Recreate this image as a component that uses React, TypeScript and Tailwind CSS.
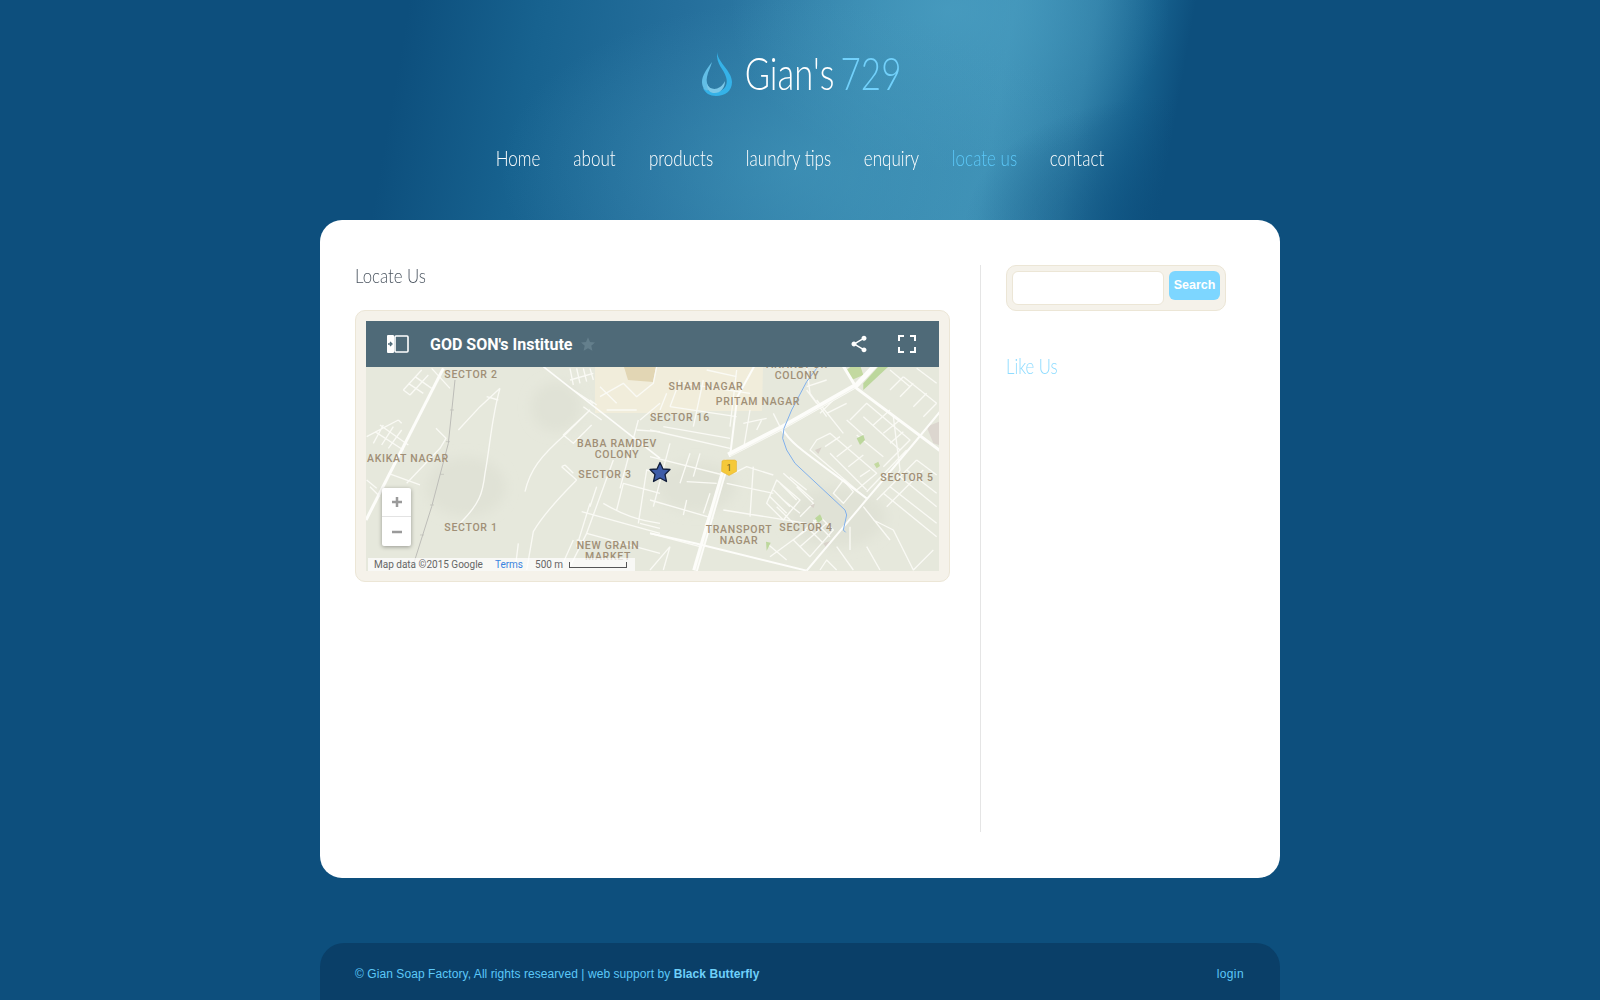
import React from "react";

const nav: [string, string][] = [
  ["Home", "w-[44px]"], ["about", "w-[43px]"], ["products", "w-[64px]"], ["laundry tips", "w-[85px]"],
  ["enquiry", "w-[55px]"], ["locate us", "w-[65px]"], ["contact", "w-[54px]"],
];

const labels: [string, number, number][] = [
  ["SECTOR 2", 105, 11], ["AKIKAT NAGAR", 42, 95], ["BABA RAMDEV", 251, 80], ["COLONY", 251, 91],
  ["SECTOR 3", 239, 111], ["SECTOR 1", 105, 164], ["NEW GRAIN", 242, 182], ["MARKET", 242, 193],
  ["SHAM NAGAR", 340, 23], ["PRITAM NAGAR", 392, 38], ["SECTOR 16", 314, 54], ["SECTOR 5", 541, 114],
  ["TRANSPORT", 373, 166], ["NAGAR", 373, 177], ["SECTOR 4", 440, 164], ["COLONY", 431, 12], ["ANANDPUR", 431, 1],
];

const leftMinor = [
  "M130 90 L185 30 M150 105 L205 45 M130 90 L150 105 M145 70 L190 100 M165 50 L215 85 M215 25 L270 85",
  "M20 230 L115 180 M40 250 L70 195 M65 255 L100 200 M85 265 L125 210 M45 215 L130 270 M60 195 L145 255 M115 180 L125 190",
  "M228 205 L258 235 L240 265 L140 370 M20 360 L50 385 M30 380 L60 410 M85 340 L180 375",
  "M295 210 L360 140 L420 85 M420 85 C395 170 390 260 375 340 C368 400 360 430 300 490 M380 110 L415 120",
  "M495 395 C510 330 540 290 620 220 L690 150 M690 150 L610 225 L640 250 L695 195",
  "M630 25 L640 75 M650 25 L660 70 M670 25 L680 65 M690 25 L700 60 M630 60 L700 40 M640 90 L700 130 M670 140 L725 180 M690 120 L710 135",
  "M500 630 L520 515 C540 480 590 420 650 360 M605 320 L650 360 M615 315 L640 340 M605 320 L615 315",
  "M840 490 L900 505 M730 430 C790 465 830 480 900 490 M680 520 L900 580 M665 455 L900 520 M770 450 L790 370 L900 400 M710 380 L690 440 M835 490 L860 330 L900 340 M780 385 L835 180 M830 210 L900 215 M870 160 L900 170",
  "M840 180 L900 130 M720 110 L790 70 L830 110 L880 70 L890 20 M740 150 L830 150 M720 80 L770 130",
  "M630 620 L680 520 L760 300 M690 430 L650 560 M475 550 L465 630 M650 540 L680 545 M600 630 L640 540",
];

const rightMinor = [
  "M0 210 L240 265 M0 290 L220 345 M0 420 L190 475 M0 520 L150 560 M60 250 L10 440 M120 280 L90 370 M150 280 L130 350 M110 420 L100 465 M0 630 L60 560 M60 560 L40 630",
  "M230 370 L370 400 M220 450 L470 490 M250 340 L290 320 L370 345 M310 320 L300 470 M200 400 L165 500 M110 365 L200 370 M180 400 L160 460",
  "M300 150 L280 270 M260 30 L240 200 M40 200 L240 235 M60 140 L260 170 M160 60 L130 200 M30 150 L50 100 M60 140 L90 60 M280 190 L350 175 M320 210 L335 180 M100 70 L300 100 M170 30 L260 50 M370 160 L400 220",
  "M470 20 L480 100 L530 170 M500 120 L580 220 M470 80 L530 60 M550 120 L510 160 M530 160 L590 130 M470 90 L500 130",
  "M500 240 L540 220 L680 340 L620 390 L480 270 Z M525 260 L570 230 M560 290 L605 255 M595 320 L640 285 M630 350 L660 330 M540 280 L650 390 M580 360 L610 395 L580 430 L550 400 Z",
  "M600 180 L650 130 L780 240 L700 320 M640 170 L750 270 M670 195 L720 150 M700 220 L750 180 M720 250 L760 215 M620 225 L700 290 M590 180 L640 225",
  "M700 20 L660 60 M720 90 L760 50 M750 110 L790 70 M790 140 L830 100 M820 170 L860 130 M760 50 L860 130 M800 25 L860 70 M720 30 L780 80",
  "M650 395 L770 270 M680 420 L800 300 M710 440 L820 330 M700 400 L860 530 M720 380 L860 490 M750 350 L860 440 M770 330 L860 400 M800 300 L860 345 M730 170 L750 330 L740 350 M640 440 L720 540 M670 480 L730 510 L790 630 L850 570",
  "M380 360 L450 420 L400 480 L350 430 Z M400 340 L490 420 M370 390 L420 440 M390 370 L440 420 M360 410 L410 460 M420 350 L470 390 M380 440 L430 490 M400 420 L450 460 M440 380 L490 430 L450 470",
  "M430 540 L510 470 L550 510 L480 590 Z M450 560 L530 490 M470 500 L520 550 M490 480 L540 530 M360 590 L470 510 M350 550 L410 600 M600 500 L600 570 M560 560 L610 630 M650 560 L690 630 M510 630 L530 600 L560 630",
];

function MapArt() {
  return (
    <svg width="573" height="204" viewBox="0 0 573 204" className="block">
      <defs>
        <filter id="mapblur"><feGaussianBlur stdDeviation="6" /></filter>
      </defs>
      <rect width="573" height="204" fill="#e6e8dc" />
      <g filter="url(#mapblur)" fill="#e0e2d6">
        <ellipse cx="100" cy="120" rx="40" ry="30" />
        <ellipse cx="190" cy="40" rx="25" ry="25" />
        <ellipse cx="470" cy="150" rx="50" ry="30" />
        <ellipse cx="330" cy="120" rx="40" ry="25" />
      </g>
      <path d="M229 0 H397 L396 44 L330 44 L320 46 L229 46 Z" fill="#f1eddb" />
      <path d="M258 0 L290 0 L287 15 L262 13 Z" fill="#e2d6b4" />
      <g transform="translate(-6,-7) scale(.33333)" fill="none" stroke="#fafaf5" strokeWidth="4" strokeLinejoin="round">
        {leftMinor.map((d, i) => <path key={i} d={d} />)}
        <path d="M18 480 L250 25" strokeWidth="9" stroke="#fdfdfa" />
        <path d="M550 20 L900 295" strokeWidth="5" stroke="#fdfdfa" />
        <path d="M285 60 L265 250 L215 440 L155 630" stroke="#bdbdb8" strokeWidth="3" />
        <path d="M270 150 h12 M258 245 h12 M240 343 h12 M210 435 h12 M180 525 h12" stroke="#bdbdb8" strokeWidth="2" />
      </g>
      <g transform="translate(284,-7) scale(.33333)" fill="none" stroke="#fafaf5" strokeWidth="4" strokeLinejoin="round">
        {rightMinor.map((d, i) => <path key={i} d={d} />)}
        <path d="M590 30 L625 0 L640 45 L605 60 Z" fill="#c3d9a0" stroke="none" />
        <path d="M640 90 L715 20 L685 20 L640 70 Z" fill="#bcd79c" stroke="none" />
        <path d="M620 235 L640 225 L645 240 L630 255 Z" fill="#bcd79c" stroke="none" />
        <path d="M672 312 L685 305 L690 318 L680 325 Z" fill="#c3d9a0" stroke="none" />
        <path d="M495 475 L510 463 L518 478 L505 488 Z" fill="#bcd79c" stroke="none" />
        <path d="M348 545 L362 548 L350 572 Z" fill="#bcd79c" stroke="none" />
        <path d="M830 200 L868 185 L868 255 L850 250 Z" fill="#dcd6cf" stroke="none" />
        <path d="M520 550 L540 543 L530 565 Z M480 435 L495 432 L490 445 Z M495 270 L515 262 L505 282 Z" fill="#d8d2ca" stroke="none" />
        <path d="M135 632 L232 300" strokeWidth="17" stroke="#fdfdfa" />
        <path d="M137 632 L234 300" strokeWidth="1.500" stroke="#e6e8dc" />
        <path d="M240 290 L262 110 L312 20" strokeWidth="6" stroke="#fdfdfa" />
        <path d="M235 285 L400 200 L620 75 L700 -10" strokeWidth="15" stroke="#fdfdfa" />
        <path d="M240 288 L400 205 L620 80" strokeWidth="1.500" stroke="#e6e8dc" />
        <path d="M575 10 L620 85 L870 272" strokeWidth="9" stroke="#fdfdfa" />
        <path d="M870 155 L800 240 L470 632" strokeWidth="6" stroke="#fdfdfa" />
        <path d="M400 210 C420 250 470 280 650 415" strokeWidth="6" stroke="#fdfdfa" />
        <path d="M0 520 L135 550 L470 632" strokeWidth="6" stroke="#fdfdfa" />
        <path d="M500 25 L470 65 L425 150 L402 205 L398 235 L410 270 L435 310 L585 450 L590 465 L580 510 L587 517" stroke="#7fb0ec" strokeWidth="3" />
      </g>
      <g fontFamily="Roboto, sans-serif" fontSize="10.5" fontWeight="500" fill="#a08f76" textAnchor="middle" letterSpacing=".7">
        {labels.map(([t, x, y], i) => <text key={i} x={x} y={y}>{t}</text>)}
      </g>
      <path d="M294 95.500 L297 102 L304 102.500 L299 107.500 L300.500 114.500 L294 111 L287.500 114.500 L289 107.500 L284 102.500 L291 102 Z" fill="#3d5ca8" stroke="#14203c" strokeWidth="1.300" strokeLinejoin="round" />
      <path d="M356 94 Q358 92.500 360 93 L367 93 Q369 92.500 370.500 94 L370.500 104.500 L363 108.500 L355.500 104.500 Z" fill="#f5c93a" stroke="#e0ae2a" strokeWidth=".5" />
      <text x="363" y="104" fontFamily="Roboto, sans-serif" fontSize="9" fill="#6b5a1c" textAnchor="middle">1</text>
    </svg>
  );
}

function Drop() {
  return (
    <svg width="33" height="47" viewBox="20 10 33 47" className="shrink-0">
      <path d="M37 11 C38 22 52 30 52 41 C52 50 45 55 36 55 C30 55 25 52 23 47 C28 50 34 52 40 50 C46 48 48 42 46 36 C44 28 36 24 37 11Z" fill="#35b2e8" />
      <path d="M32 21 C27 28 22 34 22 41 C22 44 23 46 24 48 C27 50 30 50 30 48 C27 44 26 40 27 36 C28 30 31 26 32 21Z" fill="#62bee6" />
      <path d="M27 43 C30 50 40 50 45 40 C45 47 40 53 33 52 C29 51 27 48 27 43Z" fill="#7cc8e8" />
    </svg>
  );
}

export default function App() {
  return (
    <div className="h-[1000px] overflow-hidden bg-[#0d4f7d] font-['Liberation_Sans',sans-serif]">
      <header className="h-[220px] flex flex-col items-center bg-[radial-gradient(ellipse_210px_130px_at_1175px_225px,rgba(13,79,125,0.85),rgba(13,79,125,0)),radial-gradient(ellipse_300px_170px_at_800px_170px,rgba(70,155,190,0.5),rgba(70,155,190,0)),radial-gradient(ellipse_220px_160px_at_950px_10px,rgba(75,160,195,0.7),rgba(75,160,195,0)),linear-gradient(100deg,#0d4f7d_25%,#17628f_33%,#256f9c_42%,#3686ad_54%,#3e90b5_62%,#2f7ea6_67%,#17628f_70.500%,#0d4f7d_73%)] font-['Lato',sans-serif]">
        <div className="mt-[51px] h-[47px] flex items-center">
          <Drop />
          <span className="ml-[12px] pb-[4px] w-[89px] flex justify-center whitespace-nowrap text-[46px] font-light leading-none scale-x-[0.75] text-white">Gian's</span>
          <span className="ml-[7px] pb-[4px] w-[60px] flex justify-center whitespace-nowrap text-[46px] font-light leading-none scale-x-[0.76] text-[#72d1fb]">729</span>
        </div>
        <nav className="mt-[46px] flex gap-[33px] text-[21px] font-light leading-[28px]">
          {nav.map(([n, w]) => (
            <a key={n} className={`${w} flex justify-center whitespace-nowrap scale-x-[0.81] ${n === "locate us" ? "text-[#5cc8f8]" : "text-white"}`}>{n}</a>
          ))}
        </nav>
      </header>

      <main className="mx-auto w-[960px] h-[658px] bg-white rounded-[22px] pl-[35px] pt-[45px] flex">
        <section className="w-[595px]">
          <h2 className="font-['Lato',sans-serif] font-light text-[20px] leading-[20px] origin-left scale-x-[0.84] text-[#4b5560]">Locate Us</h2>
          <div className="mt-[25px] h-[272px] bg-[#f5f2ea] border border-[#ece6d6] rounded-[10px] p-[10px]">
            <div className="relative h-[250px] overflow-hidden">
              <div className="h-[46px] bg-[#4f6a78] flex items-center text-white">
                <svg width="22" height="18" viewBox="0 0 22 18" className="ml-[21px]">
                  <rect x="0" y="0" width="7" height="18" rx="1" fill="#fff" />
                  <rect x="8" y="1" width="13" height="16" rx="1" fill="none" stroke="#fff" strokeWidth="1.600" />
                  <path d="M1 9 H4 M3 7 L5 9 L3 11" stroke="#4f6a78" strokeWidth="1.300" fill="none" />
                </svg>
                <span className="ml-[21px] pt-px font-['Roboto',sans-serif] font-bold text-[16px]">GOD SON's Institute</span>
                <svg width="16" height="16" viewBox="0 0 24 24" className="ml-[7px]" fill="#647f8c">
                  <path d="M12 2l3 7 7.500.700-5.600 5 1.700 7.300L12 18.200 5.400 22l1.700-7.300-5.600-5L9 9z" />
                </svg>
                <svg width="20" height="20" viewBox="0 0 24 24" className="ml-auto" fill="#fff">
                  <path d="M18 16.100c-.8 0-1.400.3-2 .8l-7.100-4.200c.1-.2.100-.5.100-.7s0-.5-.1-.7L16 7.200c.5.500 1.200.8 2 .8 1.700 0 3-1.300 3-3s-1.300-3-3-3-3 1.300-3 3c0 .2 0 .5.100.7L8 9.800C7.500 9.300 6.800 9 6 9c-1.700 0-3 1.300-3 3s1.300 3 3 3c.8 0 1.500-.3 2-.8l7.100 4.200c-.1.200-.1.400-.1.600 0 1.600 1.300 2.900 3 2.900s3-1.300 3-2.900-1.300-2.900-3-2.900z" />
                </svg>
                <svg width="20" height="20" viewBox="0 0 20 20" className="ml-[28px] mr-[22px]" fill="none" stroke="#fff" strokeWidth="2">
                  <path d="M2 7 V2 H7 M13 2 H18 V7 M18 13 V18 H13 M7 18 H2 V13" />
                </svg>
              </div>
              <MapArt />
              <div className="absolute left-[16px] top-[167px] w-[29px] h-[58px] bg-white rounded-[2px] shadow-[0_1px_4px_rgba(0,0,0,0.35)] flex flex-col">
                <div className="h-[29px] border-b border-[#e3e3e3] flex items-center justify-center">
                  <svg width="12" height="12" viewBox="0 0 12 12"><path d="M6 1 V11 M1 6 H11" stroke="#9a9a9a" strokeWidth="2.500" /></svg>
                </div>
                <div className="flex-1 flex items-center justify-center">
                  <svg width="12" height="12" viewBox="0 0 12 12"><path d="M1 6 H11" stroke="#9a9a9a" strokeWidth="2.500" /></svg>
                </div>
              </div>
              <div className="absolute left-[2px] bottom-0 w-[267px] h-[13px] bg-white/70 flex items-center font-['Roboto',sans-serif] text-[10px] leading-none text-[#666]">
                <span className="ml-[6px]">Map data ©2015 Google</span>
                <span className="ml-[12px] text-[#3a84df]">Terms</span>
                <span className="ml-[12px]">500 m</span>
                <span className="ml-[6px] w-[58px] h-[6px] border-x border-b border-[#555]" />
              </div>
            </div>
          </div>
        </section>

        <aside className="ml-[30px] w-[247px] h-[567px] border-l border-[#e5e5e5] pl-[25px]">
          <div className="w-[220px] h-[46px] bg-[#f5f2ea] border border-[#ece6d6] rounded-[10px] p-[5px] flex items-start">
            <div className="w-[152px] h-[34px] bg-white border border-[#ece6d6] rounded-[6px]" />
            <button className="ml-[5px] w-[51px] h-[29px] bg-[#7dd6ff] rounded-[6px] text-white font-bold text-[12.500px] leading-none">Search</button>
          </div>
          <h3 className="mt-[43px] font-['Lato',sans-serif] font-light text-[22px] leading-[24px] origin-left scale-x-[0.76] text-[#8fdcff]">Like Us</h3>
        </aside>
      </main>

      <footer className="mx-auto mt-[65px] w-[960px] h-[100px] bg-[#0a3f68] rounded-t-[24px] pl-[35px] pr-[36px] pt-[24px] flex justify-between text-[12px] leading-[14px] tracking-[0.070px] text-[#5cc8f8]">
        <span>© Gian Soap Factory, All rights researved | web support by <b className="font-bold text-[#6fd0fa]">Black Butterfly</b></span>
        <span className="tracking-[0.400px]">login</span>
      </footer>
    </div>
  );
}
